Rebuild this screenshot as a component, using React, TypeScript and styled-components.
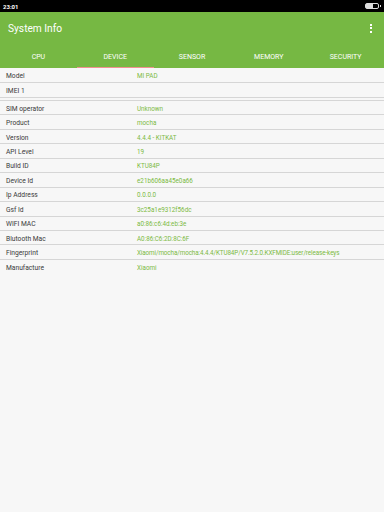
import React from 'react';
import styled, { createGlobalStyle } from 'styled-components';

const Global = createGlobalStyle`
  html, body {
    margin: 0;
    padding: 0;
    background: #f7f7f7;
  }
  body {
    font-family: Roboto, "Noto Sans", sans-serif;
  }
`;

const Screen = styled.div`
  width: 384px;
  height: 512px;
  background: #f7f7f7;
  display: flex;
  flex-direction: column;
  overflow: hidden;
`;

const StatusBar = styled.div`
  height: 12px;
  background: #000;
  display: flex;
  align-items: center;
  justify-content: space-between;
  padding: 0 4px 0 3px;
  color: #fff;
  font-size: 6px;
  font-weight: bold;
`;

const Battery = styled.div`
  position: relative;
  width: 12px;
  height: 4px;
  border: 1px solid #ddd;
  border-radius: 2px;
  margin-right: 1px;

  &::before {
    content: '';
    position: absolute;
    left: 0;
    top: 0;
    bottom: 0;
    width: 7px;
    background: #ddd;
  }

  &::after {
    content: '';
    position: absolute;
    right: -3px;
    top: 1px;
    width: 1px;
    height: 2px;
    background: #ddd;
  }
`;

const AppBar = styled.div`
  background: #76b843;
  display: flex;
  flex-direction: column;
`;

const TitleRow = styled.div`
  height: 32px;
  display: flex;
  align-items: center;
  justify-content: space-between;
  padding: 0 12px 0 8px;
`;

const Title = styled.div`
  color: #fff;
  font-size: 10.2px;
  margin-top: 1px;
`;

const Dots = styled.div`
  display: flex;
  flex-direction: column;
  gap: 1.5px;

  span {
    width: 2px;
    height: 2px;
    background: #fff;
  }
`;

const Tabs = styled.div`
  display: flex;
  height: 24px;
`;

const Tab = styled.div<{ $active?: boolean }>`
  box-sizing: border-box;
  flex: 1;
  display: flex;
  align-items: center;
  justify-content: center;
  color: #fff;
  font-size: 7px;
  padding-top: 2px;
  border-bottom: 1px solid ${(p) => (p.$active ? '#f29090' : 'transparent')};
`;

const List = styled.div`
  display: flex;
  flex-direction: column;
`;

const Section = styled.div`
  display: flex;
  flex-direction: column;
  & + & {
    margin-top: 2px;
    border-top: 1px solid #d6d6d6;
  }
`;

const Row = styled.div<{ $last?: boolean; $h?: number }>`
  box-sizing: border-box;
  height: ${(p) => p.$h ?? 14.45}px;
  display: flex;
  align-items: center;
  padding: 2px 6px 0;
  border-bottom: 1px solid ${(p) => (p.$last ? 'transparent' : '#d6d6d6')};
`;

const Label = styled.div`
  width: 131px;
  color: #3a3a3a;
  font-size: 6.7px;
`;

const Value = styled.div<{ $tight?: boolean }>`
  color: #7bba3f;
  font-size: 6.3px;
  white-space: nowrap;
  letter-spacing: ${(p) => (p.$tight ? '-0.1px' : '0')};
`;

const tabs = ['CPU', 'DEVICE', 'SENSOR', 'MEMORY', 'SECURITY'];

const top: [string, string][] = [
  ['Model', 'MI PAD'],
  ['IMEI 1', ''],
];

const rows: [string, string][] = [
  ['SIM operator', 'Unknown'],
  ['Product', 'mocha'],
  ['Version', '4.4.4 - KITKAT'],
  ['API Level', '19'],
  ['Build ID', 'KTU84P'],
  ['Device Id', 'e21b606aa45e0a66'],
  ['Ip Address', '0.0.0.0'],
  ['Gsf Id', '3c25a1e9312f56dc'],
  ['WIFI MAC', 'a0:86:c6:4d:eb:3e'],
  ['Blutooth Mac', 'A0:86:C6:2D:8C:6F'],
  ['Fingerprint', 'Xiaomi/mocha/mocha:4.4.4/KTU84P/V7.5.2.0.KXFMIDE:user/release-keys'],
  ['Manufacture', 'Xiaomi'],
];

const App = () => (
  <Screen>
    <Global />
    <StatusBar>
      <span>23:01</span>
      <Battery />
    </StatusBar>
    <AppBar>
      <TitleRow>
        <Title>System Info</Title>
        <Dots>
          <span />
          <span />
          <span />
        </Dots>
      </TitleRow>
      <Tabs>
        {tabs.map((t) => (
          <Tab key={t} $active={t === 'DEVICE'}>
            {t}
          </Tab>
        ))}
      </Tabs>
    </AppBar>
    <List>
      <Section>
        {top.map(([k, v]) => (
          <Row key={k} $h={15}>
            <Label>{k}</Label>
            <Value>{v}</Value>
          </Row>
        ))}
      </Section>
      <Section>
        {rows.map(([k, v], i) => (
          <Row key={k} $last={i === rows.length - 1}>
            <Label>{k}</Label>
            <Value $tight={v.length > 40}>{v}</Value>
          </Row>
        ))}
      </Section>
    </List>
  </Screen>
);

export default App;
